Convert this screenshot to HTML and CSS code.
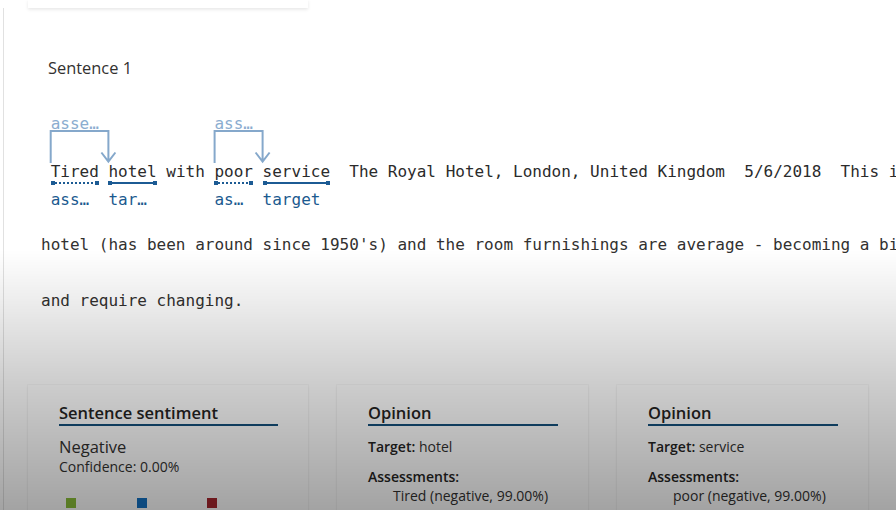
FILE: index.html
```html
<!DOCTYPE html>
<html lang="en">
<head>
<meta charset="utf-8">
<title>Sentence analysis</title>
<link rel="stylesheet" href="styles.css">
</head>
<body>
<div class="top-card"></div>
<main class="panel">
  <div class="sentence-title">Sentence 1</div>
  <div class="doc">
    <div class="line1">
      <span class="seg"> </span>
      <span class="ann">
        <span class="top">asse…</span>
        <span class="word">Tired</span>
        <span class="ul dotted"></span>
        <span class="bottom">ass…</span>
      </span>
      <span class="seg"> </span>
      <span class="ann">
        <span class="top"></span>
        <span class="word">hotel</span>
        <span class="ul solid"></span>
        <span class="bottom">tar…</span>
      </span>
      <span class="seg"> with </span>
      <span class="ann">
        <span class="top">ass…</span>
        <span class="word">poor</span>
        <span class="ul dotted"></span>
        <span class="bottom">as…</span>
      </span>
      <span class="seg"> </span>
      <span class="ann">
        <span class="top"></span>
        <span class="word">service</span>
        <span class="ul solid"></span>
        <span class="bottom">target</span>
      </span>
      <span class="seg">  The Royal Hotel, London, United Kingdom  5/6/2018  This is an old</span>
      <svg class="links" width="260" height="60" viewBox="0 0 260 60">
        <path d="M9.7 49 V17 H67.4 V47.5 M60.4 38.5 L67.4 47.5 L74.4 38.5" />
        <path d="M173.6 49 V17 H221.6 V47.5 M214.6 38.5 L221.6 47.5 L228.6 38.5" />
      </svg>
    </div>
    <div class="line">hotel (has been around since 1950's) and the room furnishings are average - becoming a bit old now</div>
    <div class="line">and require changing.</div>
  </div>
  <section class="cards">
    <div class="card card-wide">
      <h2 class="card-title">Sentence sentiment</h2>
      <div class="sentiment">Negative</div>
      <div class="confidence">Confidence: 0.00%</div>
      <div class="legend">
        <span class="swatch pos"></span>
        <span class="swatch neu"></span>
        <span class="swatch neg"></span>
      </div>
    </div>
    <div class="card">
      <h2 class="card-title">Opinion</h2>
      <div class="field"><b>Target:</b> hotel</div>
      <div class="field field-gap"><b>Assessments:</b></div>
      <div class="assess">Tired (negative, 99.00%)</div>
    </div>
    <div class="card">
      <h2 class="card-title">Opinion</h2>
      <div class="field"><b>Target:</b> service</div>
      <div class="field field-gap"><b>Assessments:</b></div>
      <div class="assess">poor (negative, 99.00%)</div>
    </div>
  </section>
</main>
<div class="shade"></div>
</body>
</html>
```

FILE: styles.css
```css
html, body {
  margin: 0;
  padding: 0;
}
body {
  width: 896px;
  height: 510px;
  overflow: hidden;
  background: #ffffff;
  font-family: "Open Sans", "Noto Sans", sans-serif;
  color: #323130;
}
.top-card {
  margin-left: 28px;
  width: 280px;
  height: 8px;
  background: #ffffff;
  box-shadow: 0 1.6px 3.6px rgba(0,0,0,0.10), 0 0.3px 0.9px rgba(0,0,0,0.08);
  position: relative;
  z-index: 1;
}
.panel {
  margin-left: 3px;
  border-left: 1px solid #e1e1e1;
  height: 502px;
  overflow: hidden;
}
.sentence-title {
  margin-top: 49px;
  padding-left: 44px;
  font-size: 16.4px;
  line-height: 22px;
  color: #323130;
}
.doc {
  display: flex;
  flex-direction: column;
  margin-top: 35px;
  padding-left: 37px;
  font-family: "DejaVu Sans Mono", "Liberation Mono", monospace;
  font-size: 16px;
  color: #2b2b2b;
}
.line1 {
  position: relative;
  display: flex;
  align-items: flex-start;
  height: 95.5px;
  margin-bottom: 7.4px;
}
.seg {
  flex: none;
  padding-top: 48px;
  line-height: 20px;
  white-space: pre;
}
.ann {
  flex: none;
  display: flex;
  flex-direction: column;
  line-height: 20px;
  white-space: pre;
}
.top {
  height: 20px;
  color: #8badd0;
}
.word {
  margin-top: 28px;
  height: 20px;
}
.ul {
  height: 5px;
  margin-top: -2px;
}
.ul.solid {
  background:
    linear-gradient(#1c5b94, #1c5b94) left center / 4px 4px no-repeat,
    linear-gradient(#1c5b94, #1c5b94) right center / 4px 4px no-repeat,
    linear-gradient(#1c5b94, #1c5b94) center / 100% 2px no-repeat;
}
.ul.dotted {
  background:
    linear-gradient(#1c5b94, #1c5b94) left center / 4px 4px no-repeat,
    linear-gradient(#1c5b94, #1c5b94) right center / 4px 4px no-repeat,
    repeating-linear-gradient(90deg, #1c5b94 0 2px, transparent 2px 4px) center / 100% 2px no-repeat;
}
.bottom {
  margin-top: 4.5px;
  height: 20px;
  color: #1b5a8f;
}
.links {
  position: absolute;
  left: 0;
  top: 0;
  fill: none;
  stroke: #85a8cb;
  stroke-width: 2;
}
.line {
  line-height: 56.6px;
  color: #323130;
  white-space: pre;
}
.cards {
  display: flex;
  gap: 29px;
  margin-top: 54.5px;
  padding-left: 24px;
  align-items: flex-start;
}
.card {
  flex: none;
  width: 251px;
  height: 150px;
  box-sizing: border-box;
  padding: 17px 30px 0 31px;
  background: #ffffff;
  box-shadow: 0 0 0 1px rgba(0,0,0,0.025), 0 1.2px 3px rgba(0,0,0,0.06);
}
.card-wide {
  width: 280px;
}
.card-title {
  margin: 0;
  font-size: 16.5px;
  font-weight: 600;
  line-height: 22px;
  color: #252423;
  border-bottom: 2px solid #15507c;
}
.sentiment {
  margin-top: 10px;
  font-size: 16.5px;
  line-height: 22px;
  color: #323130;
}
.confidence {
  font-size: 14px;
  line-height: 18px;
  color: #323130;
}
.legend {
  display: flex;
  margin-top: 22.7px;
  padding-left: 7px;
  gap: 60.5px;
}
.swatch {
  width: 10px;
  height: 10px;
}
.swatch.pos { background: #8bbf3a; }
.swatch.neu { background: #1372c4; }
.swatch.neg { background: #a8272f; }
.field {
  margin-top: 12px;
  font-size: 14px;
  line-height: 18px;
  color: #323130;
}
.field b {
  font-weight: 600;
  color: #252423;
}
.field-gap {
  margin-top: 12px;
}
.assess {
  margin-top: 1.5px;
  padding-left: 25px;
  font-size: 14px;
  line-height: 18px;
  color: #323130;
}
.shade {
  position: fixed;
  inset: 0;
  pointer-events: none;
  background: linear-gradient(to bottom,
    rgba(0,0,0,0) 0px,
    rgba(0,0,0,0) 250px,
    rgba(0,0,0,0.07) 300px,
    rgba(0,0,0,0.20) 385px,
    rgba(0,0,0,0.36) 510px);
}
```
